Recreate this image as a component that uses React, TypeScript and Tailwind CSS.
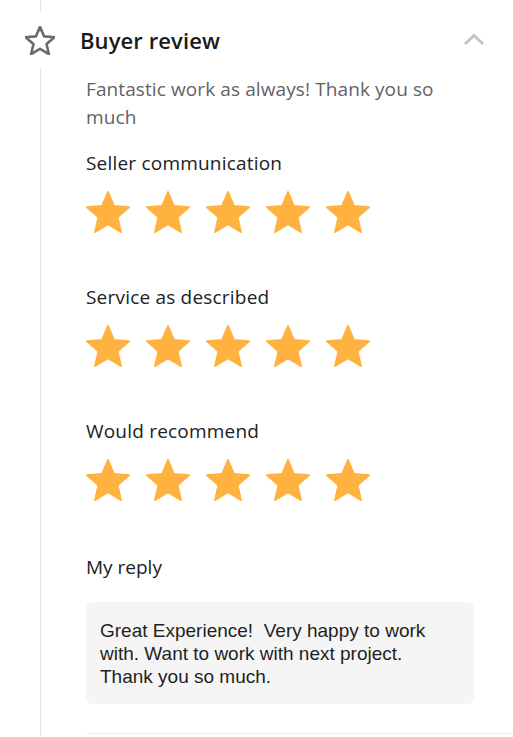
import React from "react";

const STAR = "M12 17.27L18.18 21l-1.64-7.03L22 9.24l-7.19-.61L12 2 9.19 8.63 2 9.24l5.46 4.73L5.82 21z";

function FilledStar() {
  return (
    <svg width="46" height="42" viewBox="1.6 1.6 20.8 19.8" className="block">
      <path d={STAR} fill="#FFB23F" stroke="#FFB23F" strokeWidth="0.8" strokeLinejoin="round" />
    </svg>
  );
}

function Stars() {
  return (
    <div className="flex gap-[14px] mt-[14px] -ml-[1px]">
      <FilledStar />
      <FilledStar />
      <FilledStar />
      <FilledStar />
      <FilledStar />
    </div>
  );
}

function Rating({ label, first }: { label: string; first?: boolean }) {
  return (
    <div className={first ? "mt-[18px]" : "mt-[50px]"}>
      <div className="text-[19px] leading-[28px] text-[#202124] tracking-[0.2px]" style={{ fontFamily: '"Open Sans", sans-serif' }}>
        {label}
      </div>
      <Stars />
    </div>
  );
}

export default function App() {
  return (
    <div className="w-[513px] h-[737px] bg-white overflow-hidden" style={{ fontFamily: '"Open Sans", sans-serif' }}>
      <div className="h-[12px] ml-[40px] border-l border-[#e3e3e3]" />
      <div className="h-[56px] flex items-center">
        <div className="w-[80px] flex justify-center">
          <svg width="30" height="29" viewBox="1.6 1.6 20.8 19.8" className="block -ml-[1px]">
            <path d={STAR} fill="none" stroke="#6b6b6b" strokeWidth="1.8" strokeLinejoin="round" />
          </svg>
        </div>
        <div className="flex-1 text-[22px] font-semibold text-[#1a1a1a] tracking-[0.1px]" style={{ fontFamily: '"Open Sans", sans-serif' }}>
          Buyer review
        </div>
        <svg width="22" height="14" viewBox="0 0 22 14" className="mr-[28px] mt-[-2px]">
          <path d="M2 12 L11 3.5 L20 12" fill="none" stroke="#c4c4c4" strokeWidth="3" />
        </svg>
      </div>
      <div className="ml-[40px] border-l border-[#e3e3e3] pl-[45px] pt-[7px] h-[700px]">
        <div className="text-[19px] leading-[28px] text-[#5f6368] pr-[40px] tracking-[0.1px]">
          Fantastic work as always! Thank you so much
        </div>
        <Rating label="Seller communication" first />
        <Rating label="Service as described" />
        <Rating label="Would recommend" />
        <div className="mt-[52px] text-[19px] leading-[28px] text-[#202124]">My reply</div>
        <div
          className="mt-[21px] w-[388px] h-[102px] bg-[#f5f5f5] rounded-[7px] px-[14px] pt-[17px] text-[19px] leading-[23px] text-[#1f1f1f]"
          style={{ fontFamily: '"Liberation Sans", Arial, sans-serif' }}
        >
          Great Experience!&nbsp; Very happy to work with. Want to work with next project. Thank you so much.
        </div>
        <div className="mt-[29px] border-t border-[#ebebeb]" />
      </div>
    </div>
  );
}
